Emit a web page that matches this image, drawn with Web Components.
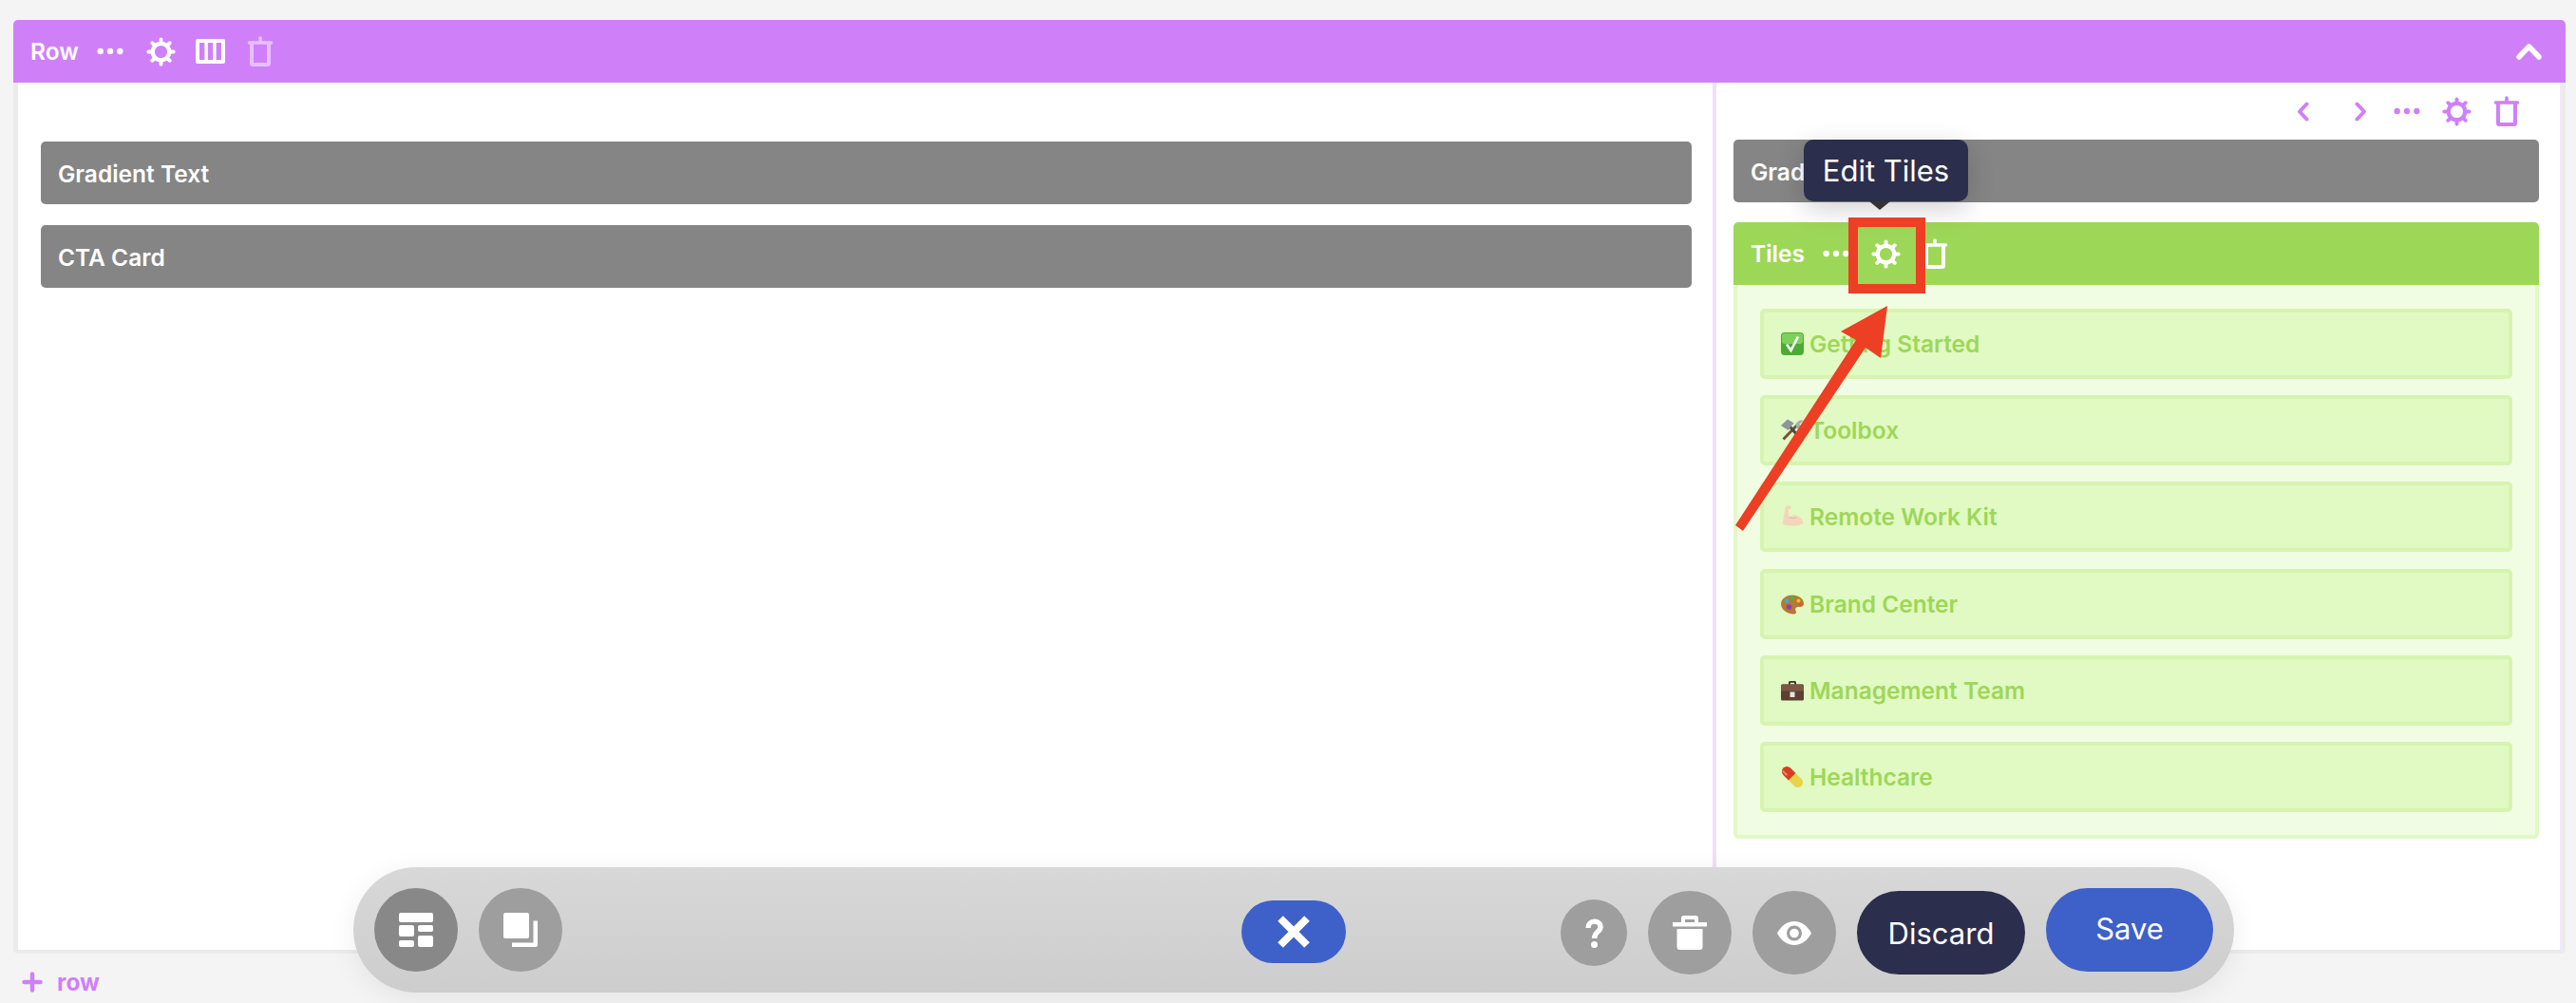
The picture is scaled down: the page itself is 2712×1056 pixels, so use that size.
<!DOCTYPE html>
<html>
<head>
<meta charset="utf-8">
<style>
  html, body { margin: 0; padding: 0; height: 100%; }
  body { background: #f4f4f4; font-family: Inter, "Liberation Sans", sans-serif; overflow: hidden; }
</style>
</head>
<body>

<builder-page></builder-page>

<script>
const ICONS = {
  gear: `<circle cx="16" cy="16" r="9" fill="none" stroke="currentColor" stroke-width="4.4"/>
    <path d="M16 2.400v3M16 26.600v3M2.400 16h3M26.600 16h3M6.400 6.400l2.100 2.100M23.500 23.500l2.100 2.100M6.400 25.600l2.100-2.100M23.500 8.500l2.100-2.100" stroke="currentColor" stroke-width="4" stroke-linecap="round"/>`,
  trash: `<path d="M5 8v20.500q0 1.500 1.500 1.500h15q1.500 0 1.500-1.500V8" fill="none" stroke="currentColor" stroke-width="4"/>
    <path d="M2.500 7h23M14 5V2" stroke="currentColor" stroke-width="3.600" stroke-linecap="round"/>`,
  dots: `<circle cx="5" cy="16" r="3.400" fill="currentColor"/><circle cx="16" cy="16" r="3.400" fill="currentColor"/><circle cx="27" cy="16" r="3.400" fill="currentColor"/>`,
};

function icon(name, w, h = w, vb = `0 0 ${w === 28 ? 28 : 32} 32`) {
  return `<svg width="${w}" height="${h}" viewBox="${vb}" style="display:block;flex:none" aria-hidden="true">${ICONS[name]}</svg>`;
}

// ── Emoji drawn by hand ──────────────────────────────────────────────────
const EMOJI = {
  check: `<rect x="0" y="0" width="24" height="24" rx="4" fill="#4aad32"/><rect x="1" y="1" width="22" height="11" rx="3" fill="#7fd05a"/>
    <path d="M6 12.500l4.500 6.500L18 4.500" fill="none" stroke="#fff" stroke-width="2.600"/>`,
  tools: `<path d="M2.500 21.500L17.500 6" stroke="#7a5230" stroke-width="3"/><path d="M22 22.500L7.500 6" stroke="#454c54" stroke-width="3.200"/>
    <path d="M0 7l7-6.500 6.500 4-6 7.500z" fill="#8c949c"/><path d="M15.500 7c.5-4 4-6.500 8-5l-4 3.500 1.500 2 3.500-2.500c.5 4-2.500 7-6.500 6z" fill="#a6adb4"/><path d="M18.500 17.500l5 5.500-2.500 1.500-5-5.500z" fill="#23272b"/>`,
  arm: `<path d="M5 1.500c2-1.800 4.500-1.600 5.500.3.600 1.200-.2 2.300-1.600 2.300l-1.200.4c0 2.600.4 5.500 1.300 7.700 2.500-2 6.500-2.400 9.500-.7 3 1.600 5 4.400 4.800 7.500-3.800 2.700-14 3.700-21.300.9C1.500 19.500 3.400 7 5 1.500z" fill="#f4d5bb"/><path d="M8.500 12.700c3 1.500 5 1 7.500.3" fill="none" stroke="#dfb798" stroke-width="1"/>`,
  palette: `<path d="M12 2.500C5 2.500 0 7 0 12c0 6 7 10.500 13 10.500 3 0 3.500-1.500 2.500-3.500-1-2.500.5-4 3-4 3.500 0 5.500-1 5.500-3.500C24 6 18 2.500 12 2.500z" fill="#b5792f"/>
    <circle cx="6" cy="8.500" r="2.400" fill="#3fa7e0"/><circle cx="12" cy="5.800" r="2.200" fill="#4db34a"/><circle cx="18.500" cy="8.500" r="2" fill="#e9c22f"/><circle cx="21" cy="12.500" r="1.900" fill="#e5533d"/><circle cx="8.500" cy="15" r="2.700" fill="#8a3fc0"/>`,
  case: `<path d="M8 6V3.500C8 2.500 9 2 10 2h4c1 0 2 .5 2 1.500V6h-1.800V3.800H9.800V6z" fill="#3d2a20"/><rect x="0" y="5.500" width="24" height="17" rx="1.500" fill="#5e4030"/><rect x="0" y="5.500" width="24" height="7" rx="1.500" fill="#7b5843"/><rect x="9.500" y="13.500" width="5" height="5.500" fill="#e6e6e2"/>`,
  pill: `<g transform="rotate(-45 12 12)"><rect x="6.700" y="-1.500" width="10.600" height="27" rx="5.300" fill="#e8d24a"/><path d="M6.700 11.500V3.800a5.300 5.300 0 0 1 10.600 0v7.700z" fill="#d63f22"/><rect x="8.300" y="0" width="2" height="7" rx="1" fill="#ef8a6c"/></g>`,
};

// ── Small components ─────────────────────────────────────────────────────

class BuilderBlock extends HTMLElement {
  connectedCallback() {
    if (this.shadowRoot) return;
    this.attachShadow({ mode: 'open' }).innerHTML = `
      <style>
        :host {
          display: flex;
          align-items: center;
          height: 66px;
          box-sizing: border-box;
          padding: 2px 18px 0;
          background: #858585;
          border-radius: 5px;
          color: #fff;
          font-size: 24.5px;
          font-weight: 600;
        }
      </style>
      <slot></slot>`;
  }
}

class TileItem extends HTMLElement {
  connectedCallback() {
    if (this.shadowRoot) return;
    const em = EMOJI[this.getAttribute('emoji')] || '';
    this.attachShadow({ mode: 'open' }).innerHTML = `
      <style>
        :host {
          display: flex;
          align-items: center;
          gap: 6px;
          height: 74px;
          box-sizing: border-box;
          padding: 0 18px;
          background: #e1f9c2;
          border: 4px solid #d6f4af;
          border-radius: 5px;
          color: #9dd757;
          font-size: 24.5px;
          font-weight: 600;
        }
        svg { display: block; flex: none; }
      </style>
      <svg width="24" height="24" viewBox="0 0 24 24">${em}</svg>
      <slot></slot>`;
  }
}

class TilesWidget extends HTMLElement {
  connectedCallback() {
    if (this.shadowRoot) return;
    this.attachShadow({ mode: 'open' }).innerHTML = `
      <style>
        :host { display: block; }
        .hdr {
          display: flex;
          align-items: center;
          height: 66px;
          padding: 0 0 0 18px;
          background: #9dd757;
          border-radius: 5px 5px 0 0;
          color: #fff;
          font-size: 24.5px;
          font-weight: 600;
        }
        .dots { margin-left: 18px; }
        .gear { margin-left: 22px; }
        .trash { margin-left: 22px; }
        .body {
          display: flex;
          flex-direction: column;
          gap: 17.2px;
          padding: 25px 24px 24px;
          background: #f1fde2;
          border: 4px solid #e3f8c8;
          border-top: 0;
          border-radius: 0 0 5px 5px;
        }
      </style>
      <div class="hdr">
        <span>Tiles</span>
        <span class="dots">${icon('dots', 30)}</span>
        <span class="gear">${icon('gear', 31)}</span>
        <span class="trash">${icon('trash', 28, 32)}</span>
      </div>
      <div class="body"><slot></slot></div>`;
  }
}

class RowHeader extends HTMLElement {
  connectedCallback() {
    if (this.shadowRoot) return;
    this.attachShadow({ mode: 'open' }).innerHTML = `
      <style>
        :host {
          display: flex;
          align-items: center;
          height: 66px;
          padding: 0 25px 0 18px;
          background: #cf80f9;
          border-radius: 5px 5px 0 0;
          color: #fff;
          font-size: 24.5px;
          font-weight: 600;
        }
        .dots { margin-left: 18px; }
        .gear { margin-left: 23px; }
        .cols { margin-left: 21px; }
        .trash { margin-left: 23px; opacity: .5; }
        .up { margin-left: auto; }
        svg { display: block; }
      </style>
      <span>Row</span>
      <span class="dots">${icon('dots', 30)}</span>
      <span class="gear">${icon('gear', 31)}</span>
      <span class="cols">
        <svg width="31" height="26" viewBox="0 0 31 26"><path fill="#fff" fill-rule="evenodd" d="M2 0h27a2 2 0 0 1 2 2v22a2 2 0 0 1-2 2H2a2 2 0 0 1-2-2V2a2 2 0 0 1 2-2zM4 4v18h5.400V4zM12.800 4v18h5.400V4zM21.600 4v18H27V4z"/></svg>
      </span>
      <span class="trash">${icon('trash', 28, 32)}</span>
      <span class="up">
        <svg width="27" height="18" viewBox="0 0 27 18"><path d="M3 15L13.500 4 24 15" fill="none" stroke="#fff" stroke-width="5.500" stroke-linecap="round" stroke-linejoin="round"/></svg>
      </span>`;
  }
}

class ColumnTools extends HTMLElement {
  connectedCallback() {
    if (this.shadowRoot) return;
    this.attachShadow({ mode: 'open' }).innerHTML = `
      <style>
        :host {
          display: flex;
          align-items: center;
          justify-content: flex-end;
          height: 60px;
          color: #cf80f9;
          padding-right: 42px;
        }
        svg { display: block; }
        .next { margin-left: 48px; }
        .dots { margin-left: 27px; }
        .gear { margin-left: 22px; }
        .trash { margin-left: 23.5px; }
      </style>
      <svg width="13" height="21" viewBox="0 0 13 21"><path d="M10.500 2.500L3 10.500l7.500 8" fill="none" stroke="currentColor" stroke-width="4" stroke-linecap="round" stroke-linejoin="round"/></svg>
      <span class="next"><svg width="13" height="21" viewBox="0 0 13 21"><path d="M2.500 2.500l7.500 8-7.500 8" fill="none" stroke="currentColor" stroke-width="4" stroke-linecap="round" stroke-linejoin="round"/></svg></span>
      <span class="dots">${icon('dots', 30)}</span>
      <span class="gear">${icon('gear', 31)}</span>
      <span class="trash">${icon('trash', 28, 32)}</span>`;
  }
}

class RoundButton extends HTMLElement {
  connectedCallback() {
    if (this.shadowRoot) return;
    const size = this.getAttribute('size') || 88;
    this.attachShadow({ mode: 'open' }).innerHTML = `
      <style>
        :host {
          display: flex;
          flex: none;
          align-items: center;
          justify-content: center;
          width: ${size}px;
          height: ${size}px;
          border-radius: 50%;
          background: var(--bg, #9e9e9e);
        }
      </style>
      <slot></slot>`;
  }
}

class PillButton extends HTMLElement {
  connectedCallback() {
    if (this.shadowRoot) return;
    this.attachShadow({ mode: 'open' }).innerHTML = `
      <style>
        :host {
          display: flex;
          flex: none;
          align-items: center;
          justify-content: center;
          box-sizing: border-box;
          width: 177px;
          height: 88px;
          border-radius: 44px;
          background: var(--bg, #2b2f4d);
          color: #fff;
          font-size: 31px;
          font-weight: 400;
        }
      </style>
      <slot></slot>`;
  }
}

class BottomBar extends HTMLElement {
  connectedCallback() {
    if (this.shadowRoot) return;
    this.attachShadow({ mode: 'open' }).innerHTML = `
      <style>
        :host {
          position: absolute;
          left: 372px;
          top: 913px;
          width: 1980px;
          height: 132px;
          box-sizing: border-box;
          padding: 0 22px;
          border-radius: 66px;
          background: linear-gradient(#d8d8d8, #cdcdcd);
          box-shadow: 0 6px 30px rgba(0,0,0,.07);
          display: grid;
          grid-template-columns: 1fr auto 1fr;
          align-items: center;
        }
        .left, .right { display: flex; align-items: center; gap: 22px; }
        .right { justify-content: flex-end; }
        .center { display: flex; margin-top: 4px; }
        .low { margin-top: 6px; }
        .x {
          display: flex;
          align-items: center;
          justify-content: center;
          width: 110px;
          height: 66px;
          border-radius: 33px;
          background: #3d60c9;
        }
        svg { display: block; }
      </style>
      <div class="left">
        <round-button style="--bg:#888">
          <svg width="36" height="36" viewBox="0 0 36 36" fill="#fff">
            <rect x="0" y="0" width="36" height="10" rx="2"/>
            <rect x="0" y="13" width="16" height="12" rx="2"/><rect x="20" y="13" width="16" height="7" rx="2"/>
            <rect x="0" y="29" width="16" height="7" rx="2"/><rect x="20" y="24" width="16" height="12" rx="2"/>
          </svg>
        </round-button>
        <round-button>
          <svg width="36" height="36" viewBox="0 0 36 36" fill="#fff">
            <rect x="0" y="0" width="27" height="27" rx="2"/>
            <path d="M31.500 8.500H36V34a2 2 0 0 1-2 2H9v-4.500h22.500z"/>
          </svg>
        </round-button>
      </div>
      <div class="center">
        <div class="x">
          <svg width="34" height="34" viewBox="0 0 34 34"><path d="M3 3l28 28M31 3L3 31" stroke="#fff" stroke-width="8"/></svg>
        </div>
      </div>
      <div class="right">
        <round-button class="low" size="70">
          <svg width="19" height="31" viewBox="0 0 19 31"><path d="M3 10C3 1 16 1 16 9c0 5-6.500 5-6.500 12" fill="none" stroke="#fff" stroke-width="5.400"/><circle cx="9.500" cy="27.500" r="3.500" fill="#fff"/></svg>
        </round-button>
        <round-button class="low">
          <svg width="36" height="36" viewBox="0 0 36 36" fill="#fff">
            <path fill-rule="evenodd" d="M9 7V2.500A2.500 2.500 0 0 1 11.500 0h13A2.500 2.500 0 0 1 27 2.500V7h-4V4H13v3zM0 7h36v4.500H0zM4.500 14h27v19a3 3 0 0 1-3 3h-21a3 3 0 0 1-3-3z"/>
          </svg>
        </round-button>
        <round-button class="low">
          <svg width="36" height="25" viewBox="0 0 36 25"><path fill="#fff" fill-rule="evenodd" d="M18 0c8 0 14 5 18 12.500C32 20 26 25 18 25S4 20 0 12.500C4 5 10 0 18 0zm0 4.500a8 8 0 1 0 0 16 8 8 0 0 0 0-16z"/><circle cx="18" cy="12.500" r="4.800" fill="#fff"/></svg>
        </round-button>
        <pill-button class="low">Discard</pill-button>
        <pill-button style="--bg:#3d60c9;width:176px;padding-bottom:4px">Save</pill-button>
      </div>`;
  }
}

class EditTooltip extends HTMLElement {
  connectedCallback() {
    if (this.shadowRoot) return;
    this.attachShadow({ mode: 'open' }).innerHTML = `
      <style>
        :host {
          position: absolute;
          left: 1899px;
          top: 147px;
          width: 173px;
          height: 65px;
          display: flex;
          align-items: center;
          justify-content: center;
          background: #2b2f4d;
          border-radius: 10px;
          color: #fff;
          font-size: 31px;
          font-weight: 400;
          box-shadow: 0 8px 28px rgba(0,0,0,.18);
        }
        .tip {
          position: absolute;
          left: 69px;
          top: 65px;
          width: 0;
          height: 0;
          border: 11px solid transparent;
          border-top: 9px solid #333;
          border-bottom: 0;
        }
      </style>
      <slot></slot><span class="tip"></span>`;
  }
}

// red annotation laid over the screenshot: box round the gear and an arrow to it
class AnnotationMark extends HTMLElement {
  connectedCallback() {
    if (this.shadowRoot) return;
    this.attachShadow({ mode: 'open' }).innerHTML = `
      <style>
        :host { position: absolute; inset: 0; pointer-events: none; }
        .box {
          position: absolute;
          left: 1946px;
          top: 229px;
          width: 81px;
          height: 80px;
          box-sizing: border-box;
          border: 10px solid #ec3f24;
        }
        svg { position: absolute; left: 0; top: 0; }
      </style>
      <div class="box"></div>
      <svg width="2712" height="1056" viewBox="0 0 2712 1056">
        <polygon fill="#ec3f24" points="1987,322 1980,377 1964,366 1835,559 1827,553 1954,358 1938,349"/>
      </svg>`;
  }
}

class BuilderPage extends HTMLElement {
  connectedCallback() {
    if (this.shadowRoot) return;
    const tiles = [
      ['check', 'Getting Started'],
      ['tools', 'Toolbox'],
      ['arm', 'Remote Work Kit'],
      ['palette', 'Brand Center'],
      ['case', 'Management Team'],
      ['pill', 'Healthcare'],
    ].map(([e, t]) => `<tile-item emoji="${e}">${t}</tile-item>`).join('');

    this.attachShadow({ mode: 'open' }).innerHTML = `
      <style>
        :host {
          display: block;
          position: relative;
          width: 2712px;
          height: 1056px;
          box-sizing: border-box;
          padding: 21px 11px 0 14px;
          overflow: hidden;
        }
        .row-body {
          display: grid;
          grid-template-columns: 1784px 1fr;
          height: 917px;
          box-sizing: border-box;
          background: #fff;
          border: 4px solid #ebebeb;
          border-top: 0;
          border-left-width: 5px;
          border-radius: 0 0 5px 5px;
        }
        .col-left {
          display: flex;
          flex-direction: column;
          gap: 22px;
          padding: 62px 22px 0 24px;
        }
        .col-right {
          display: flex;
          flex-direction: column;
          border-left: 4px solid #f0dffc;
          border-right: 2px solid #f3e6fb;
          padding: 0 22px 0 18px;
        }
        column-tools { margin-right: -22px; }
        .stack { display: flex; flex-direction: column; gap: 21px; }
        .add {
          display: flex;
          align-items: center;
          gap: 15px;
          margin: 15px 0 0 9px;
          color: #cf80f9;
          font-size: 24.5px;
          font-weight: 700;
        }
        svg { display: block; }
      </style>
      <row-header>Row</row-header>
      <div class="row-body">
        <div class="col-left">
          <builder-block>Gradient Text</builder-block>
          <builder-block>CTA Card</builder-block>
        </div>
        <div class="col-right">
          <column-tools></column-tools>
          <div class="stack">
            <builder-block>Gradient Text</builder-block>
            <tiles-widget>${tiles}</tiles-widget>
          </div>
        </div>
      </div>
      <div class="add">
        <svg width="22" height="22" viewBox="0 0 22 22"><path d="M11 2.500v17M2.500 11h17" stroke="currentColor" stroke-width="4.500" stroke-linecap="round"/></svg>
        <span>row</span>
      </div>
      <edit-tooltip>Edit Tiles</edit-tooltip>
      <annotation-mark></annotation-mark>
      <bottom-bar></bottom-bar>`;
  }
}

customElements.define('builder-block', BuilderBlock);
customElements.define('tile-item', TileItem);
customElements.define('tiles-widget', TilesWidget);
customElements.define('row-header', RowHeader);
customElements.define('column-tools', ColumnTools);
customElements.define('round-button', RoundButton);
customElements.define('pill-button', PillButton);
customElements.define('edit-tooltip', EditTooltip);
customElements.define('annotation-mark', AnnotationMark);
customElements.define('bottom-bar', BottomBar);
customElements.define('builder-page', BuilderPage);
</script>
</body>
</html>
